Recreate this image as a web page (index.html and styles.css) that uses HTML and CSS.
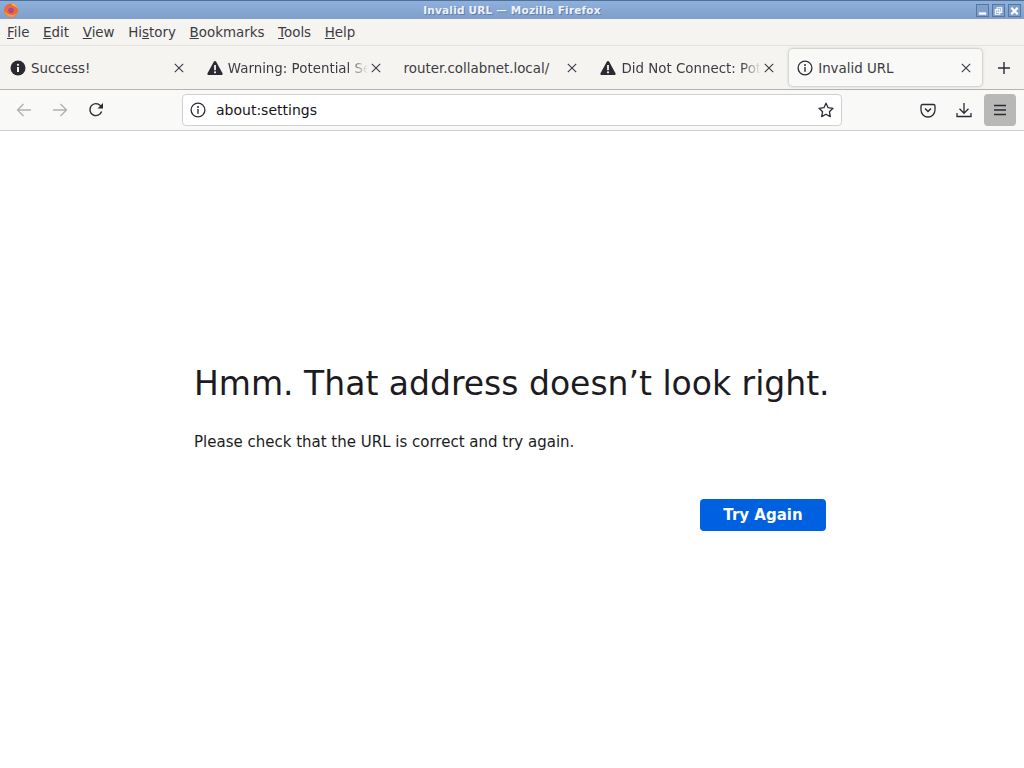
FILE: index.html
```html
<!DOCTYPE html>
<html lang="en">
<head>
  <meta charset="UTF-8">
  <title>Invalid URL — Mozilla Firefox</title>
  <link rel="stylesheet" href="styles.css">
</head>
<body>
  <div class="titlebar">
    <svg class="app-icon" width="16" height="16" viewBox="0 0 16 16">
      <circle cx="8" cy="8.500" r="7" fill="#ea6a3c"/>
      <path d="M8 1.500a7 7 0 0 1 6.800 5.500c-1-1.600-2.400-2.600-4-2.800C9.500 3.600 8.800 2.600 8 1.500z" fill="#f6b73c"/>
      <circle cx="8" cy="8.500" r="2.800" fill="#a8479a"/>
      <path d="M1.500 9c.6 3.500 3.400 6 6.500 6s5.500-1.800 6.400-4.500c-1.500 2-3.600 2.800-5.800 2.400C6 12.500 3.500 11.500 1.500 9z" fill="#f39a3a"/>
    </svg>
    <span class="title-text">Invalid URL — Mozilla Firefox</span>
    <div class="win-buttons">
      <span class="win-btn"><svg width="12" height="12" viewBox="0 0 12 12"><rect x="2" y="7.500" width="8" height="2.500" fill="#fff"/></svg></span>
      <span class="win-btn"><svg width="12" height="12" viewBox="0 0 12 12"><path d="M4.500 2.500h5v5h-5zM2.500 4.500h5v5h-5z" fill="none" stroke="#fff" stroke-width="1.200"/></svg></span>
      <span class="win-btn"><svg width="12" height="12" viewBox="0 0 12 12"><path d="M2.500 2.500l7 7M9.500 2.500l-7 7" stroke="#fff" stroke-width="2.400"/></svg></span>
    </div>
  </div>

  <div class="menubar">
    <span><u>F</u>ile</span>
    <span><u>E</u>dit</span>
    <span><u>V</u>iew</span>
    <span>Hi<u>s</u>tory</span>
    <span><u>B</u>ookmarks</span>
    <span><u>T</u>ools</span>
    <span><u>H</u>elp</span>
  </div>

  <div class="tabbar">
    <div class="tab">
      <svg class="tab-icon" width="16" height="16" viewBox="0 0 16 16"><circle cx="8" cy="8" r="7.500" fill="#2b2a33"/><rect x="7" y="7" width="2" height="5" fill="#f5f4f1"/><circle cx="8" cy="4.800" r="1.100" fill="#f5f4f1"/></svg>
      <span class="tab-label">Success!</span>
      <svg class="tab-close" width="10" height="10" viewBox="0 0 10 10"><path d="M.8.800l8.400 8.400M9.200.800L.8 9.200" stroke="#3a3944" stroke-width="1.100"/></svg>
    </div>
    <div class="tab">
      <svg class="tab-icon" width="16" height="16" viewBox="0 0 16 16"><path d="M8 1c.5 0 .9.300 1.200.7l6.300 11.500c.4.800-.1 1.800-1.100 1.800H1.600c-1 0-1.500-1-1.100-1.800L6.800 1.700C7.100 1.300 7.500 1 8 1z" fill="#2b2a33"/><rect x="7.100" y="5" width="1.800" height="5.200" fill="#f5f4f1"/><circle cx="8" cy="12.300" r="1.100" fill="#f5f4f1"/></svg>
      <span class="tab-label fade">Warning: Potential Se</span>
      <svg class="tab-close" width="10" height="10" viewBox="0 0 10 10"><path d="M.8.800l8.400 8.400M9.200.800L.8 9.200" stroke="#3a3944" stroke-width="1.100"/></svg>
    </div>
    <div class="tab">
      <span class="tab-label">router.collabnet.local/</span>
      <svg class="tab-close" width="10" height="10" viewBox="0 0 10 10"><path d="M.8.800l8.400 8.400M9.200.800L.8 9.200" stroke="#3a3944" stroke-width="1.100"/></svg>
    </div>
    <div class="tab">
      <svg class="tab-icon" width="16" height="16" viewBox="0 0 16 16"><path d="M8 1c.5 0 .9.300 1.200.7l6.300 11.500c.4.800-.1 1.800-1.100 1.800H1.600c-1 0-1.500-1-1.100-1.800L6.800 1.700C7.100 1.300 7.500 1 8 1z" fill="#2b2a33"/><rect x="7.100" y="5" width="1.800" height="5.200" fill="#f5f4f1"/><circle cx="8" cy="12.300" r="1.100" fill="#f5f4f1"/></svg>
      <span class="tab-label fade">Did Not Connect: Pot</span>
      <svg class="tab-close" width="10" height="10" viewBox="0 0 10 10"><path d="M.8.800l8.400 8.400M9.200.800L.8 9.200" stroke="#3a3944" stroke-width="1.100"/></svg>
    </div>
    <div class="tab selected">
      <svg class="tab-icon" width="16" height="16" viewBox="0 0 16 16"><circle cx="8" cy="8" r="6.900" fill="none" stroke="#2b2a33" stroke-width="1.300"/><rect x="7.300" y="7" width="1.400" height="4.800" fill="#2b2a33"/><circle cx="8" cy="4.900" r="1" fill="#2b2a33"/></svg>
      <span class="tab-label">Invalid URL</span>
      <svg class="tab-close" width="10" height="10" viewBox="0 0 10 10"><path d="M.8.800l8.400 8.400M9.200.800L.8 9.200" stroke="#3a3944" stroke-width="1.100"/></svg>
    </div>
    <svg class="new-tab" width="14" height="14" viewBox="0 0 14 14"><path d="M7 1v12M1 7h12" stroke="#2b2a33" stroke-width="1.400"/></svg>
  </div>

  <div class="navbar">
    <div class="nav-buttons">
      <svg width="16" height="16" viewBox="0 0 16 16"><path d="M15 8H1.500M7.500 2l-6 6 6 6" fill="none" stroke="#b0afb3" stroke-width="1.300"/></svg>
      <svg width="16" height="16" viewBox="0 0 16 16"><path d="M1 8h13.500M8.500 2l6 6-6 6" fill="none" stroke="#b0afb3" stroke-width="1.300"/></svg>
      <svg width="16" height="16" viewBox="0 0 16 16"><path d="M13.600 9.500A6 6 0 1 1 12.400 3.600L14.500 5.800" fill="none" stroke="#2b2a33" stroke-width="1.400"/><path d="M15 1v5.500H9.500z" fill="#2b2a33"/></svg>
    </div>
    <div class="urlbar">
      <svg width="16" height="16" viewBox="0 0 16 16"><circle cx="8" cy="8" r="6.900" fill="none" stroke="#2b2a33" stroke-width="1.300"/><rect x="7.300" y="7" width="1.400" height="4.800" fill="#2b2a33"/><circle cx="8" cy="4.900" r="1" fill="#2b2a33"/></svg>
      <span class="url-text">about:settings</span>
      <svg class="star" width="16" height="16" viewBox="0 0 16 16"><path d="M8 1.200l2.100 4.500 4.900.6-3.600 3.400.9 4.900L8 12.200l-4.300 2.400.9-4.900L1 6.300l4.900-.6z" fill="none" stroke="#2b2a33" stroke-width="1.300" stroke-linejoin="round"/></svg>
    </div>
    <div class="nav-right">
      <svg width="16" height="16" viewBox="0 0 16 16"><path d="M2.500 2.500h11c.8 0 1.500.7 1.500 1.500v4a7 7 0 0 1-14 0V4c0-.8.700-1.500 1.500-1.500z" fill="none" stroke="#2b2a33" stroke-width="1.300"/><path d="M5 6.500l3 3 3-3" fill="none" stroke="#2b2a33" stroke-width="1.500"/></svg>
      <svg width="16" height="16" viewBox="0 0 16 16"><path d="M8 1v10M3.500 6.800L8 11.300l4.500-4.500M1 11v3.500h14V11" fill="none" stroke="#2b2a33" stroke-width="1.300"/></svg>
      <div class="menu-btn">
        <svg width="14" height="12" viewBox="0 0 14 12"><path d="M1 1.500h12M1 6h12M1 10.500h12" stroke="#2b2a33" stroke-width="1.300"/></svg>
      </div>
    </div>
  </div>

  <main class="content">
    <div class="error-box">
      <h1>Hmm. That address doesn’t look right.</h1>
      <p>Please check that the URL is correct and try again.</p>
      <div class="actions">
        <button>Try Again</button>
      </div>
    </div>
  </main>
</body>
</html>
```
FILE: styles.css
```css
*, *::before, *::after {
  box-sizing: border-box;
}

html, body {
  height: 100%;
}

body {
  margin: 0;
  display: flex;
  flex-direction: column;
  font-family: "DejaVu Sans", sans-serif;
  color: #1c1b22;
  background-color: #fff;
  overflow: hidden;
}

/* window title */
.titlebar {
  height: 19px;
  flex: none;
  display: flex;
  align-items: center;
  justify-content: center;
  position: relative;
  border-top: 1px solid #4f7091;
  background: linear-gradient(#8fb0dc, #7f9fca);
}

.app-icon {
  position: absolute;
  left: 3px;
  top: 1px;
}

.title-text {
  font-size: 10.500px;
  font-weight: bold;
  letter-spacing: 0.2px;
  color: #eef2f8;
  text-shadow: 1px 1px 0 #5f7fa8;
}

.win-buttons {
  position: absolute;
  right: 3px;
  top: 3px;
  display: flex;
  gap: 3px;
}

.win-btn {
  width: 13px;
  height: 13px;
  display: flex;
  align-items: center;
  justify-content: center;
  border: 1px solid #54769f;
  background-color: #7f9fcc;
}

/* menu */
.menubar {
  height: 27px;
  flex: none;
  display: flex;
  align-items: center;
  gap: 13.700px;
  padding: 0 7px;
  font-size: 13.400px;
  color: #3c3b42;
  background-color: #f5f4f1;
  border-bottom: 1px solid #e2e1de;
}

/* tabs */
.tabbar {
  height: 44px;
  flex: none;
  display: flex;
  align-items: center;
  background-color: #f5f4f1;
  border-bottom: 1px solid #b4b3b1;
}

.tab {
  width: 196.800px;
  height: 37px;
  padding: 0 10px 0 10px;
  flex: none;
  display: flex;
  align-items: center;
  font-size: 13.400px;
  color: #3c3b42;
}

.tab.selected {
  width: 193px;
  margin-left: 2px;
  margin-right: 2px;
  padding: 0 8px 0 8px;
  background-color: #f9f9f8;
  border-radius: 4px;
  box-shadow: 0 0 3px rgba(0, 0, 0, 0.35);
}

.tab-icon {
  flex: none;
  margin-right: 5px;
}

.tab-label {
  flex: 1;
  min-width: 0;
  padding-top: 2px;
  white-space: nowrap;
  overflow: hidden;
}

.tab-label.fade {
  -webkit-mask-image: linear-gradient(to right, #000 84%, transparent 98%);
  mask-image: linear-gradient(to right, #000 84%, transparent 98%);
}

.tab-close {
  flex: none;
  margin-right: 3px;
}

.new-tab {
  flex: none;
  margin-left: 13px;
}

/* toolbar */
.navbar {
  height: 41px;
  flex: none;
  display: flex;
  align-items: center;
  background-color: #f9f9f8;
  border-bottom: 1px solid #cfcfd0;
}

.nav-buttons {
  width: 182px;
  flex: none;
  display: flex;
  gap: 20px;
  padding-left: 16px;
}

.urlbar {
  width: 660px;
  height: 32px;
  flex: none;
  display: flex;
  align-items: center;
  padding: 0 7px;
  background-color: #fff;
  border: 1px solid #d0d0d2;
  border-radius: 4px;
}

.url-text {
  flex: 1;
  margin-left: 10px;
  font-size: 14px;
  color: #15141a;
}

.nav-right {
  flex: 1;
  display: flex;
  align-items: center;
  justify-content: flex-end;
  gap: 20px;
  padding-right: 8px;
}

.menu-btn {
  width: 32px;
  height: 32px;
  margin-left: -8px;
  display: flex;
  align-items: center;
  justify-content: center;
  background-color: #b8b8b6;
  border-radius: 4px;
}

/* error page */
.content {
  flex: 1;
  display: flex;
  justify-content: center;
  padding-top: 231px;
}

.error-box {
  width: 636px;
}

h1 {
  margin: 0;
  font-size: 33px;
  font-weight: 400;
  line-height: 44px;
  color: #1c1b22;
  white-space: nowrap;
}

p {
  margin: 25px 0 0;
  font-size: 15px;
  line-height: 22px;
  color: #1c1b22;
}

.actions {
  display: flex;
  justify-content: flex-end;
  margin-top: 46px;
  padding-right: 4px;
}

button {
  width: 126px;
  height: 32px;
  padding: 0;
  font-family: inherit;
  font-size: 15px;
  font-weight: bold;
  color: #fbfbfe;
  background-color: #0061e0;
  border: none;
  border-radius: 4px;
}
```
